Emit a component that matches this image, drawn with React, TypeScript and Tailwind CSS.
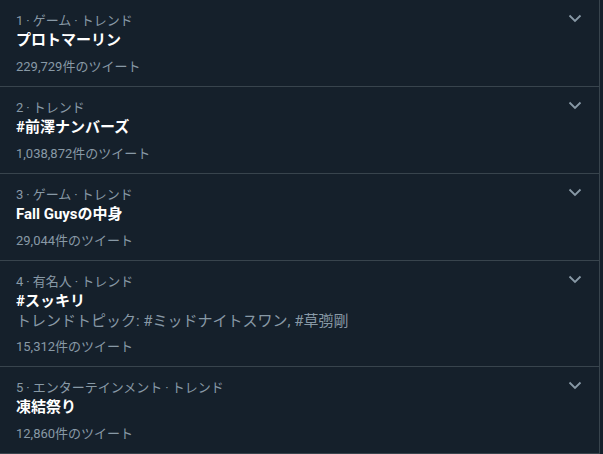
import React from "react";

type Trend = { cat: string[]; title: string; topic?: string; count: string };

const trends: Trend[] = [
  { cat: ["1", "ゲーム", "トレンド"], title: "プロトマーリン", count: "229,729件のツイート" },
  { cat: ["2", "トレンド"], title: "#前澤ナンバーズ", count: "1,038,872件のツイート" },
  { cat: ["3", "ゲーム", "トレンド"], title: "Fall Guysの中身", count: "29,044件のツイート" },
  {
    cat: ["4", "有名人", "トレンド"],
    title: "#スッキリ",
    topic: "トレンドトピック: #ミッドナイトスワン, #草彅剛",
    count: "15,312件のツイート",
  },
  { cat: ["5", "エンターテインメント", "トレンド"], title: "凍結祭り", count: "12,860件のツイート" },
];

function Chevron() {
  return (
    <svg width="14" height="9" viewBox="0 0 14 9" className="block">
      <polyline points="1.5,1.5 7,7 12.5,1.5" fill="none" stroke="#8899a6" strokeWidth="1.8" />
    </svg>
  );
}

export default function App() {
  return (
    <div
      className="w-[603px] h-[454px] bg-[#15202b] overflow-hidden"
      style={{ fontFamily: 'Roboto, "Noto Sans CJK JP", sans-serif' }}
    >
      <div className="w-[600px] border-r border-[#38444d] h-full">
        {trends.map((t, i) => (
          <div key={i} className="relative px-4 pt-3 pb-[11px] border-b border-[#38444d]">
            <div className="text-[13px] leading-4 text-[#8899a6] pt-[1px] -mb-[1px]">
              {t.cat.map((c, j) => (
                <React.Fragment key={j}>
                  {j > 0 && <span className="mx-[3px]">·</span>}
                  <span>{c}</span>
                </React.Fragment>
              ))}
            </div>
            <div className="pt-[2px] text-[15px] leading-5 font-bold text-[#ffffff]">{t.title}</div>
            {t.topic && <div className="text-[15px] leading-5 text-[#8899a6]">{t.topic}</div>}
            <div className={`${t.topic ? "mt-[8px]" : "mt-[9px]"} text-[13px] leading-4 text-[#8899a6]`}>
              {t.count}
            </div>
            <div className="absolute right-[17px] top-[14px]">
              <Chevron />
            </div>
          </div>
        ))}
      </div>
    </div>
  );
}
